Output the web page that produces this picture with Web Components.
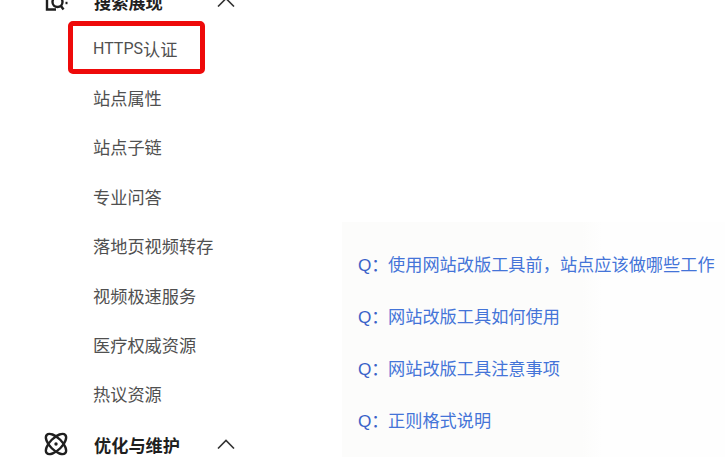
<!DOCTYPE html>
<html>
<head>
<meta charset="utf-8">
<style>
  html, body { margin: 0; height: 100%; overflow: hidden; background: #fff; }
  body {
    font-family: "Liberation Sans", "Noto Sans CJK SC", sans-serif;
  }
  #page { display: flex; height: 457px; overflow: hidden; }
  .latin { font-family: Roboto, sans-serif; font-size: 16px; }
</style>
</head>
<body>
<div id="page">
  <side-menu>
    <menu-group label="搜索展现" icon="search"></menu-group>
    <menu-item marked><span class="latin">HTTPS</span>认证</menu-item>
    <menu-item>站点属性</menu-item>
    <menu-item>站点子链</menu-item>
    <menu-item>专业问答</menu-item>
    <menu-item>落地页视频转存</menu-item>
    <menu-item>视频极速服务</menu-item>
    <menu-item>医疗权威资源</menu-item>
    <menu-item>热议资源</menu-item>
    <menu-group label="优化与维护" icon="atom" last></menu-group>
  </side-menu>
  <faq-list>
    <faq-row>使用网站改版工具前，站点应该做哪些工作</faq-row>
    <faq-row>网站改版工具如何使用</faq-row>
    <faq-row>网站改版工具注意事项</faq-row>
    <faq-row>正则格式说明</faq-row>
  </faq-list>
</div>

<script>
class SideMenu extends HTMLElement {
  connectedCallback() {
    this.attachShadow({ mode: "open" });
    this.shadowRoot.innerHTML = `
      <style>
        :host {
          display: flex;
          flex-direction: column;
          flex: none;
          width: 342px;
          margin-top: -23px;
        }
      </style>
      <slot></slot>
    `;
  }
}

const ICONS = {
  search: `
    <path d="M3 0v19.5h9" />
    <circle cx="13.5" cy="12" r="5" />
    <path d="M17 16l2.5 3.5" />
    <path d="M21.5 13h2" />`,
  atom: `
    <ellipse cx="12" cy="12" rx="6" ry="13" transform="rotate(45 12 12)" />
    <ellipse cx="12" cy="12" rx="6" ry="13" transform="rotate(-45 12 12)" />
    <circle cx="12" cy="12" r="1.7" fill="#1f1f1f" stroke="none" />`,
};

class MenuGroup extends HTMLElement {
  connectedCallback() {
    this.attachShadow({ mode: "open" });
    const icon = ICONS[this.getAttribute("icon")] || "";
    this.shadowRoot.innerHTML = `
      <style>
        :host {
          display: flex;
          flex: none;
          align-items: center;
          height: 49.4px;
          padding-left: 44px;
          color: #1f1f1f;
          font-size: 17.2px;
          font-weight: 700;
        }
        :host([last]) { margin-top: 1px; }
        .icon { width: 24px; height: 24px; flex: none; fill: none; stroke: #1f1f1f; stroke-width: 2.4; overflow: visible; }
        .label { margin-left: 26px; width: 123px; white-space: nowrap; }
        .arrow { width: 18px; height: 10px; flex: none; fill: none; stroke: #333; stroke-width: 1.6; }
      </style>
      <svg class="icon" viewBox="0 0 24 24">${icon}</svg>
      <span class="label">${this.getAttribute("label")}</span>
      <svg class="arrow" viewBox="0 0 18 10"><path d="M1 9.5L9 1.5l8 8" /></svg>
    `;
  }
}

class MenuItem extends HTMLElement {
  connectedCallback() {
    this.attachShadow({ mode: "open" });
    this.shadowRoot.innerHTML = `
      <style>
        :host {
          display: flex;
          flex: none;
          align-items: center;
          position: relative;
          height: 49.4px;
          padding-left: 93px;
          color: #505050;
          font-size: 17.2px;
        }
        :host([marked]) { margin-top: -3px; }
        /* red annotation drawn over the item */
        .mark {
          position: absolute;
          left: 68px;
          top: -2px;
          width: 127px;
          height: 43px;
          border: 5px solid #ee0a0a;
          border-radius: 5px;
        }
      </style>
      <slot></slot>
      ${this.hasAttribute("marked") ? `<div class="mark"></div>` : ""}
    `;
  }
}

class FaqList extends HTMLElement {
  connectedCallback() {
    this.attachShadow({ mode: "open" });
    this.shadowRoot.innerHTML = `
      <style>
        :host {
          display: flex;
          flex-direction: column;
          flex: 1;
          margin-top: 222px;
          padding: 17px 0 0 16px;
          background: linear-gradient(90deg, #fcfcfb 0, #fcfcfb 240px, #fefefe 260px, #fefefe 100%);
        }
      </style>
      <slot></slot>
    `;
  }
}

class FaqRow extends HTMLElement {
  connectedCallback() {
    this.attachShadow({ mode: "open" });
    this.shadowRoot.innerHTML = `
      <style>
        :host {
          display: flex;
          align-items: center;
          flex: none;
          height: 52px;
          margin-top: -2px;
          margin-bottom: 2px;
          color: #4474d8;
          font-size: 17.2px;
          white-space: nowrap;
        }
        .q { width: 30px; flex: none; color: #3a62c8; }
      </style>
      <span class="q">Q：</span><slot></slot>
    `;
  }
}

customElements.define("side-menu", SideMenu);
customElements.define("menu-group", MenuGroup);
customElements.define("menu-item", MenuItem);
customElements.define("faq-list", FaqList);
customElements.define("faq-row", FaqRow);
</script>
</body>
</html>
